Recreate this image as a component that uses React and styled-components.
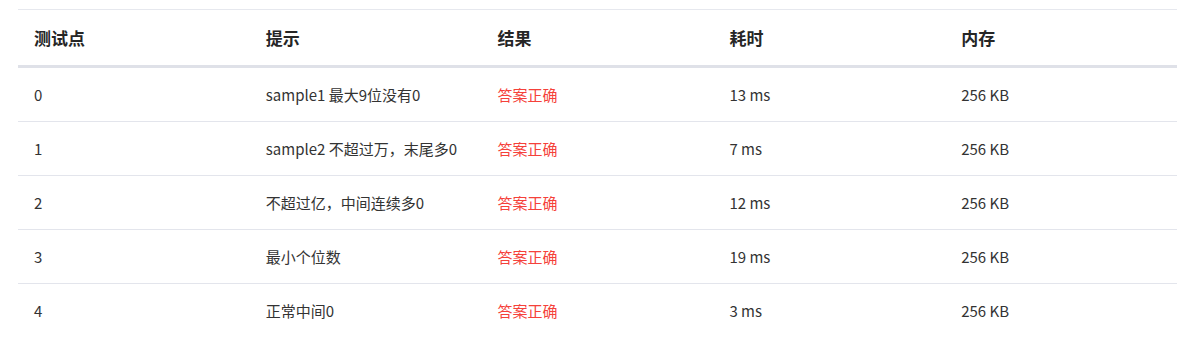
import React from "react";
import styled, { createGlobalStyle } from "styled-components";

const rows = [
  { id: 0, hint: "sample1 最大9位没有0", result: "答案正确", time: "13 ms", mem: "256 KB" },
  { id: 1, hint: "sample2 不超过万，末尾多0", result: "答案正确", time: "7 ms", mem: "256 KB" },
  { id: 2, hint: "不超过亿，中间连续多0", result: "答案正确", time: "12 ms", mem: "256 KB" },
  { id: 3, hint: "最小个位数", result: "答案正确", time: "19 ms", mem: "256 KB" },
  { id: 4, hint: "正常中间0", result: "答案正确", time: "3 ms", mem: "256 KB" },
];

function App() {
  return (
    <Page>
      <GlobalStyle />
      <StyledTable>
        <thead>
          <tr>
            <HeadCell>测试点</HeadCell>
            <HeadCell>提示</HeadCell>
            <HeadCell>结果</HeadCell>
            <HeadCell>耗时</HeadCell>
            <HeadCell>内存</HeadCell>
          </tr>
        </thead>
        <tbody>
          {rows.map((r, i) => (
            <BodyRow key={r.id} last={i === rows.length - 1}>
              <Cell>{r.id}</Cell>
              <Cell>{r.hint}</Cell>
              <Cell accepted>{r.result}</Cell>
              <Cell>{r.time}</Cell>
              <Cell>{r.mem}</Cell>
            </BodyRow>
          ))}
        </tbody>
      </StyledTable>
    </Page>
  );
}
export default App;

const GlobalStyle = createGlobalStyle`
  body {
    margin: 0;
    background: #ffffff;
    font-family: "Noto Sans CJK SC", "Noto Sans", sans-serif;
  }
`;

const Page = styled.div`
  padding: 9px 12px 0 18px;
`;

const StyledTable = styled.table`
  width: 1159px;
  border-collapse: collapse;
  table-layout: fixed;
  border-top: 1px solid #e6e8ee;
`;

const HeadCell = styled.th`
  text-align: left;
  padding: 17px 16px 16px;
  font-size: 17px;
  line-height: 22px;
  font-weight: 700;
  color: #262626;
  border-bottom: 3px solid #dfe1e8;
`;

const BodyRow = styled.tr`
  border-bottom: ${(p) => (p.last ? "none" : "1px solid #e3e5ec")};
`;

const Cell = styled.td`
  padding: 16px 16px 15px;
  font-size: 15px;
  line-height: 22px;
  color: ${(p) => (p.accepted ? "#f5413a" : "#333333")};
`;
